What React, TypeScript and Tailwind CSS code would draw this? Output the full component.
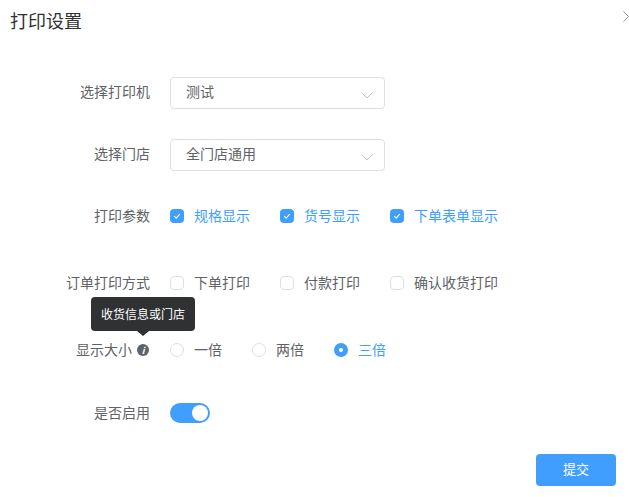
const font = "font-['Microsoft_YaHei','Noto_Sans_CJK_SC',sans-serif]";

function Row({ label, extra, className, labelClass = "mb-0.5", children }: { label: string; extra?: React.ReactNode; className?: string; labelClass?: string; children: React.ReactNode }) {
  return (
    <div className={`flex h-8 items-center ${className ?? ""}`}>
      <div className="flex w-[150px] shrink-0 items-center justify-end text-sm text-[#606266]">
        <span className={labelClass}>{label}</span>
        {extra}
      </div>
      <div className="ml-5 flex items-center">{children}</div>
    </div>
  );
}

function Select({ value }: { value: string }) {
  return (
    <div className="flex h-8 w-[215px] items-center justify-between rounded border border-[#dcdfe6] pl-[15px] pr-[11px] text-sm text-[#606266]">
      <span className="mb-1">{value}</span>
      <svg width="12" height="7" viewBox="0 0 12 7" fill="none" className="mt-[5px]">
        <path d="M0.5 0.5 L6 6 L11.5 0.5" stroke="#c0c4cc" strokeWidth="1" />
      </svg>
    </div>
  );
}

function Check({ label, checked, width }: { label: string; checked?: boolean; width: string }) {
  return (
    <div className={`flex items-center ${width}`}>
      {checked ? (
        <span className="flex size-[14px] items-center justify-center rounded-sm bg-[#409eff]">
          <svg width="10" height="10" viewBox="0 0 10 10" fill="none">
            <path d="M2.2 5.2 L4.2 7.1 L7.8 3" stroke="#fff" strokeWidth="1.1" />
          </svg>
        </span>
      ) : (
        <span className="size-[14px] rounded-sm border border-[#dcdfe6]" />
      )}
      <span className={`mb-0.5 ml-[10px] text-sm ${checked ? "text-[#409eff]" : "text-[#606266]"}`}>{label}</span>
    </div>
  );
}

function Radio({ label, checked, width }: { label: string; checked?: boolean; width: string }) {
  return (
    <div className={`flex items-center ${width}`}>
      {checked ? (
        <span className="flex size-[14px] items-center justify-center rounded-full bg-[#409eff]">
          <span className="size-1 rounded-full bg-white" />
        </span>
      ) : (
        <span className="size-[14px] rounded-full border border-[#dcdfe6]" />
      )}
      <span className={`mb-0.5 ml-[10px] text-sm ${checked ? "text-[#409eff]" : "text-[#606266]"}`}>{label}</span>
    </div>
  );
}

export default function App() {
  return (
    <div className={`relative h-[497px] w-[629px] overflow-hidden bg-white ${font}`}>
      <svg width="6" height="11" viewBox="0 0 6 11" fill="none" className="absolute left-[623px] top-[11px]">
        <path d="M0.5 0.5 L5.5 5.5 L0.5 10.5" stroke="#909399" strokeWidth="1" />
      </svg>
      <div className="pl-[10px] pt-2 text-lg leading-6 text-[#303133]">打印设置</div>

      <Row label="选择打印机" labelClass="mb-1" className="mt-[45px]">
        <Select value="测试" />
      </Row>
      <Row label="选择门店" labelClass="mb-1" className="mt-[30px]">
        <Select value="全门店通用" />
      </Row>
      <Row label="打印参数" className="mt-[29px]">
        <Check label="规格显示" checked width="w-[110px]" />
        <Check label="货号显示" checked width="w-[110px]" />
        <Check label="下单表单显示" checked width="w-[120px]" />
      </Row>
      <Row label="订单打印方式" className="mt-[35px]">
        <Check label="下单打印" width="w-[110px]" />
        <Check label="付款打印" width="w-[110px]" />
        <Check label="确认收货打印" width="w-[120px]" />
      </Row>
      <Row
        label="显示大小"
        className="mt-[35px]"
        extra={
          <span className="relative ml-[5px] mr-px flex size-3 items-center justify-center rounded-full bg-[#606266] text-[9px] font-bold italic leading-none text-white">
            i
            <span className="absolute bottom-[25px] left-[-46px] whitespace-nowrap rounded bg-[#303133] px-[10px] py-[7px] text-xs font-normal not-italic leading-5 text-white">
              收货信息或门店
              <span className="absolute left-[46px] top-full border-x-[6px] border-t-[5px] border-x-transparent border-t-[#303133]" />
            </span>
          </span>
        }
      >
        <Radio label="一倍" width="w-[82px]" />
        <Radio label="两倍" width="w-[82px]" />
        <Radio label="三倍" checked width="w-[60px]" />
      </Row>
      <Row label="是否启用" className="mt-[31px]">
        <span className="flex h-5 w-10 items-center justify-end rounded-full bg-[#409eff] pr-0.5">
          <span className="size-4 rounded-full bg-white" />
        </span>
      </Row>

      <div className="mt-[25px] flex justify-end pr-[13px]">
        <button className="h-8 w-20 rounded bg-[#409eff] pb-0.5 text-[13px] text-white">提交</button>
      </div>
    </div>
  );
}
